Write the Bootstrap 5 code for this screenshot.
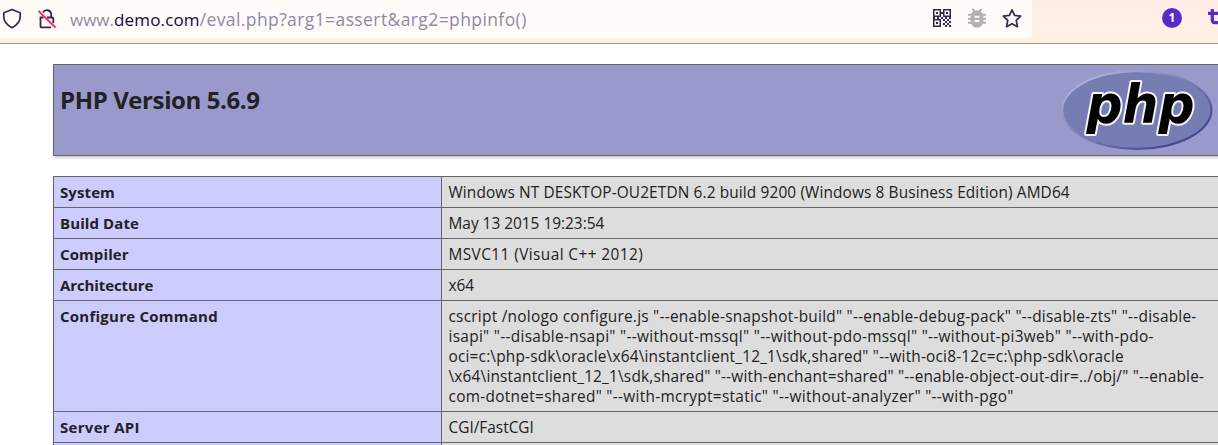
<!DOCTYPE html>
<html lang="en">
<head>
<meta charset="utf-8">
<meta name="viewport" content="width=device-width, initial-scale=1">
<title>phpinfo()</title>
<link href="https://cdn.jsdelivr.net/npm/bootstrap@5.3.0/dist/css/bootstrap.min.css" rel="stylesheet">
<style>
body{font-family:"Open Sans","Noto Sans",sans-serif;font-size:15px;line-height:20px;color:#222;background:#fff;overflow:hidden;white-space:nowrap;height:445px}
.toolbar{height:44px;background:linear-gradient(#ffece6,#fff1e4);border-bottom:1px solid #bd8b74}
.urlbar{width:1032px;height:38px;background:#fffbf9;border-bottom-right-radius:4px;color:#15073d}
.url{font-size:17px;line-height:24px;color:#8f89a3;margin-left:12px}
.url b{font-weight:400;color:#15073d;letter-spacing:.15px}
.url .query{font-size:17.500px;letter-spacing:.4px}
.toolbar svg{display:block;flex:none}
.counter{width:20px;height:20px;background:#592acb;color:#fff;font-size:12px;font-weight:700;line-height:20px;margin-left:130px}
.page-body{margin-left:53px;width:1172px;padding-top:20px}
.php-head{height:92px;background:#99c;border:1px solid #666;box-shadow:1px 2px 3px #ccc;padding:4px 0 0 6px}
.php-head h1{font-size:24px;line-height:32px;font-weight:700;margin:15px 0 0;letter-spacing:-.4px}
.php-logo{margin-right:10px}
.info{margin-top:20px;width:1172px;table-layout:fixed;border-collapse:collapse;box-shadow:1px 2px 3px #ccc}
.info th,.info td{border:1px solid #666;padding:5px 6px;vertical-align:top}
.info th{width:388px;background:#ccf;font-weight:700;letter-spacing:.1px}
.info td{background:#ddd;font-size:15.400px;padding:6px 6px 4px 6.500px}
.info td span{display:block;height:20px}
.info .track-n{letter-spacing:-.1px}
.info .track-1{letter-spacing:.13px}
.info .track-2{letter-spacing:.19px}
.info .track-3{letter-spacing:.25px}
.info .track-4{letter-spacing:.3px}
.info .track-5{letter-spacing:.42px}
</style>
</head>
<body>
<header class="toolbar d-flex">
  <div class="urlbar d-flex align-items-center">
    <svg width="24" height="36" viewBox="0 0 24 36" fill="none" stroke="#35274f" stroke-width="1.7" stroke-linejoin="round"><path d="M12 8.500 20.200 11.800V16C20.200 21 17 24 12 26.800 7 24 3.800 21 3.800 16V11.800Z"/></svg>
    <svg class="ms-2" width="26" height="36" viewBox="32 0 26 36" fill="none" stroke="#35274f" stroke-width="1.8"><path d="M43 11.500A4.400 4.400 0 0 1 51.200 12.800V16.500M43.500 16.500H40.500V25.500Q40.500 26.300 41.300 26.300H51M47 16.500H52Q53.300 16.500 53.300 17.800V22"/><path d="M38.500 10 55.500 26.500" stroke="#ff2957"/></svg>
    <div class="url">www.<b>demo.com</b><span class="query">/eval.php?arg1=assert&amp;arg2=phpinfo()</span></div>
    <div class="d-flex ms-auto pe-2">
      <svg width="20" height="36" viewBox="932 1 20 36" fill="#35274f"><path fill-rule="evenodd" d="M933 9h8v8h-8zM934.500 10.500v5h5v-5zM943 9h8v8h-8zM944.500 10.500v5h5v-5zM933 19h8v8h-8zM934.500 20.500v5h5v-5z"/><path d="M936 12h2v2h-2zM946 12h2v2h-2zM936 22h2v2h-2zM943 19h2v2h-2zM947 19h2v2h-2zM945 21h2v2h-2zM949 21h2v2h-2zM943 23h2v2h-2zM947 23h2v2h-2zM945 25h2v2h-2zM949 25h2v2h-2zM941 12h2v2h-2zM933 17h2v2h-2zM937 17h2v2h-2zM941 17h2v2h-2zM945 17h2v2h-2zM949 17h2v2h-2z"/></svg>
      <svg style="margin-left:15px" width="20" height="36" viewBox="967 1 20 36" fill="#b1b1b3"><path fill-rule="evenodd" d="M971.500 9.500 973 8.200 975.300 10.500Q977 10 978.700 10.500L981 8.200 982.400 9.500 980.700 11.500Q982.100 12.500 982.800 13.800H986V15.800H983.400V17.700H986V19.700H983.400V21.700H986V23.700H982.800Q981 27.600 977 27.600T971.200 23.700H968V21.700H970.600V19.700H968V17.700H970.600V15.800H968V13.800H971.200Q972 12.400 973.300 11.500ZM974.600 15.800v2h4.800v-2zM974.600 20v2h4.800v-2z"/></svg>
      <svg style="margin-left:13px" width="24" height="36" viewBox="1000 1 24 36" fill="none" stroke="#35274f" stroke-width="1.7" stroke-linejoin="round"><path d="M1012 9.800 1014.600 15.400 1020.700 16.100 1016.200 20.300 1017.500 26.700 1012 23.800 1006.500 26.700 1007.800 20.300 1003.300 16.100 1009.400 15.400Z"/></svg>
    </div>
  </div>
  <div class="counter rounded-circle text-center mt-2">1</div>
  <svg class="ms-4" width="12" height="36" viewBox="1206 0 12 36" fill="none" stroke="#592acb" stroke-width="3.2"><path d="M1212.300 9V20Q1212.300 22.600 1215 22.600H1219M1208 13.300H1219"/></svg>
</header>
<main class="page-body">
  <div class="php-head d-flex justify-content-between">
    <h1>PHP Version 5.6.9</h1>
    <svg class="php-logo" width="153" height="82" viewBox="1061.500 69 153 82">
      <defs>
        <linearGradient id="rim" x1="0" y1="0" x2="1" y2="1"><stop offset=".12" stop-color="#b2b4dd"/><stop offset=".4" stop-color="#8589bd"/><stop offset=".62" stop-color="#6569aa"/><stop offset=".82" stop-color="#44488e"/></linearGradient>
        <filter id="soft"><feGaussianBlur stdDeviation=".7"/></filter>
      </defs>
      <ellipse cx="1137.500" cy="110" rx="75.500" ry="40" fill="url(#rim)"/>
      <ellipse cx="1137.300" cy="110" rx="73.500" ry="37.800" fill="#777bb3" filter="url(#soft)"/>
      <text x="1087" y="122.500" font-family="DejaVu Sans" font-size="53" font-weight="700" font-style="italic" textLength="108" lengthAdjust="spacingAndGlyphs" stroke="#f4f4fa" stroke-width="4" stroke-linejoin="round" paint-order="stroke">php</text>
    </svg>
  </div>
  <table class="info">
    <tr><th>System</th><td class="track-1">Windows NT DESKTOP-OU2ETDN 6.2 build 9200 (Windows 8 Business Edition) AMD64</td></tr>
    <tr><th>Build Date</th><td>May 13 2015 19:23:54</td></tr>
    <tr><th>Compiler</th><td class="track-5">MSVC11 (Visual C++ 2012)</td></tr>
    <tr><th class="track-n">Architecture</th><td>x64</td></tr>
    <tr><th class="track-3">Configure Command</th><td><span class="track-3">cscript /nologo configure.js "--enable-snapshot-build" "--enable-debug-pack" "--disable-zts" "--disable-</span><span class="track-4">isapi" "--disable-nsapi" "--without-mssql" "--without-pdo-mssql" "--without-pi3web" "--with-pdo-</span><span class="track-2">oci=c:\php-sdk\oracle\x64\instantclient_12_1\sdk,shared" "--with-oci8-12c=c:\php-sdk\oracle</span><span class="track-2">\x64\instantclient_12_1\sdk,shared" "--with-enchant=shared" "--enable-object-out-dir=../obj/" "--enable-</span><span class="track-4">com-dotnet=shared" "--with-mcrypt=static" "--without-analyzer" "--with-pgo"</span></td></tr>
    <tr><th class="track-4">Server API</th><td>CGI/FastCGI</td></tr>
    <tr><th class="p-0 pt-1"></th><td class="p-0 pt-1"></td></tr>
  </table>
</main>
<script src="https://cdn.jsdelivr.net/npm/bootstrap@5.3.0/dist/js/bootstrap.bundle.min.js"></script>
</body>
</html>
